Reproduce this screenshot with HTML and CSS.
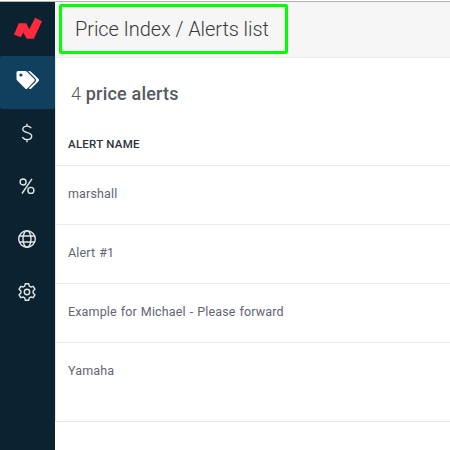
FILE: index.html
```
<!DOCTYPE html>
<html lang="en">
<head>
    <meta charset="UTF-8">
    <meta name="viewport" content="width=device-width, initial-scale=1.0">
    <title>Price Index / Alerts list</title>
    <link rel="stylesheet" href="styles.css">
</head>
<body>
    <div class="app">
        <nav class="sidebar">
            <a class="logo" href="#" aria-label="Home">
                <svg width="55" height="54" viewBox="0 0 55 54">
                    <path fill="#ff2b3c" d="M14 32.5 L18.7 21.3 H26.2 L29.3 27.2 L35.2 15.8 L42 19.3 L33.8 36.8 H26.7 L23.2 30.5 L20.8 35.3 Z"/>
                </svg>
            </a>
            <a class="nav-item active" href="#" aria-label="Prices">
                <svg width="24" height="20" viewBox="0 0 24 20">
                    <path fill="#fff" fill-rule="evenodd" d="M2 1 H9.2 Q10.2 1 11 1.8 L18.3 9.1 Q19.3 10.2 18.3 11.2 L11.3 18.5 Q10.2 19.5 9.2 18.5 L1.2 10.6 Q.5 9.9 .5 9 V2.5 Q.5 1 2 1 Z M4.9 3.4 a1.6 1.6 0 1 0 0 3.2 a1.6 1.6 0 1 0 0 -3.2 Z"/>
                    <path fill="#fff" d="M12 1 H13.2 Q14.2 1 15 1.8 L22.6 9.1 Q23.6 10.2 22.6 11.2 L15.3 18.5 Q14.2 19.5 13 18.6 L12.8 18.3 L19.3 11.9 Q21 10.2 19.4 8.4 Z"/>
                </svg>
            </a>
            <a class="nav-item" href="#" aria-label="Revenue">
                <svg class="line" width="12" height="20" viewBox="0 0 12 20">
                    <path d="M6 .8 V3.2 M6 16.6 V19.2 M10.3 5.2 C9.3 3.8 7.8 3.1 6 3.1 C3.5 3.1 1.8 4.4 1.8 6.3 C1.8 10.5 10.7 8.6 10.7 13 C10.7 15.2 8.8 16.6 6.1 16.6 C4 16.6 2.2 15.7 1.2 14.2"/>
                </svg>
            </a>
            <a class="nav-item" href="#" aria-label="Margins">
                <svg class="line" width="16" height="18" viewBox="0 0 16 18">
                    <circle cx="4.1" cy="5" r="3"/>
                    <circle cx="11.9" cy="13.4" r="3"/>
                    <path d="M13 1.8 L3 16.5"/>
                </svg>
            </a>
            <a class="nav-item" href="#" aria-label="Regions">
                <svg class="line" width="20" height="20" viewBox="0 0 20 20">
                    <circle cx="10" cy="10" r="8.3"/>
                    <ellipse cx="10" cy="10" rx="4" ry="8.3"/>
                    <path d="M2.4 7 H17.6 M2.4 13 H17.6"/>
                </svg>
            </a>
            <a class="nav-item" href="#" aria-label="Settings">
                <svg class="line" width="20" height="20" viewBox="0 0 20 20">
                    <path stroke-linejoin="round" d="M8.3 1.7 H11.7 L12.3 4.2 L13.8 5 L16.2 4.3 L17.9 7.2 L16.1 9 V11 L17.9 12.8 L16.2 15.7 L13.8 15 L12.3 15.8 L11.7 18.3 H8.3 L7.7 15.8 L6.2 15 L3.8 15.7 L2.1 12.8 L3.9 11 V9 L2.1 7.2 L3.8 4.3 L6.2 5 L7.7 4.2 Z"/>
                    <circle cx="10" cy="10" r="2.7"/>
                </svg>
            </a>
        </nav>

        <main class="content">
            <header class="page-header">
                <h1 class="title">Price Index / Alerts list</h1>
            </header>
            <section class="alerts">
                <h2 class="count">4 <strong>price alerts</strong></h2>
                <div class="table-head">ALERT NAME</div>
                <div class="row">marshall</div>
                <div class="row">Alert #1</div>
                <div class="row">Example for Michael - Please forward</div>
                <div class="row">Yamaha</div>
            </section>
        </main>
    </div>
</body>
</html>
```
FILE: styles.css
```
* {
    box-sizing: border-box;
}

body {
    margin: 0;
    background-color: #fff;
    font-family: Roboto, "Liberation Sans", sans-serif;
    overflow: hidden;
}

.app {
    display: flex;
    height: 449px;
    margin-top: 1px;
    border-top: 1px solid #b1b1b1;
}

/* Sidebar */
.sidebar {
    display: flex;
    flex-direction: column;
    width: 55px;
    background-color: #0b2230;
}

.logo {
    height: 54px;
}

.logo svg {
    display: block;
}

.nav-item {
    display: flex;
    align-items: center;
    justify-content: center;
    height: 53px;
    padding-right: 1px;
    padding-bottom: 5px;
}

.nav-item.active {
    background-color: #11405f;
    border-radius: 2px;
    padding-right: 0;
}

.line {
    fill: none;
    stroke: #e3e6e8;
    stroke-width: 1.4;
}

/* Header */
.content {
    flex: 1;
    min-width: 0;
}

.page-header {
    height: 56px;
    padding: 2px 4px;
    background-color: #f6f6f6;
    border-bottom: 1px solid #ececec;
}

.title {
    width: 229px;
    height: 50px;
    margin: 0;
    padding-left: 13px;
    border: 3px solid #00ff00;
    border-radius: 2px;
    color: #3a3a3a;
    font-size: 20px;
    font-weight: 300;
    line-height: 45px;
    letter-spacing: -0.08px;
    white-space: nowrap;
}

/* Alerts table */
.alerts {
    height: 364px;
    border-left: 1px solid #e6e6e6;
    border-bottom: 1px solid #e6e6e6;
    color: #5f6571;
}

.count {
    height: 71px;
    margin: 0;
    padding: 25px 0 0 15px;
    color: #555a5f;
    font-size: 18px;
    font-weight: 300;
    line-height: 22px;
    letter-spacing: 0.2px;
}

.count strong {
    font-weight: 500;
}

.table-head {
    height: 36px;
    padding-left: 12px;
    color: #2d3138;
    font-size: 11.5px;
    font-weight: 500;
    line-height: 31px;
    letter-spacing: 0.25px;
}

.row {
    height: 59px;
    padding-left: 12px;
    border-top: 1px solid #e7ebee;
    font-size: 12.5px;
    line-height: 56px;
    letter-spacing: 0.15px;
    word-spacing: 0.7px;
}
```
